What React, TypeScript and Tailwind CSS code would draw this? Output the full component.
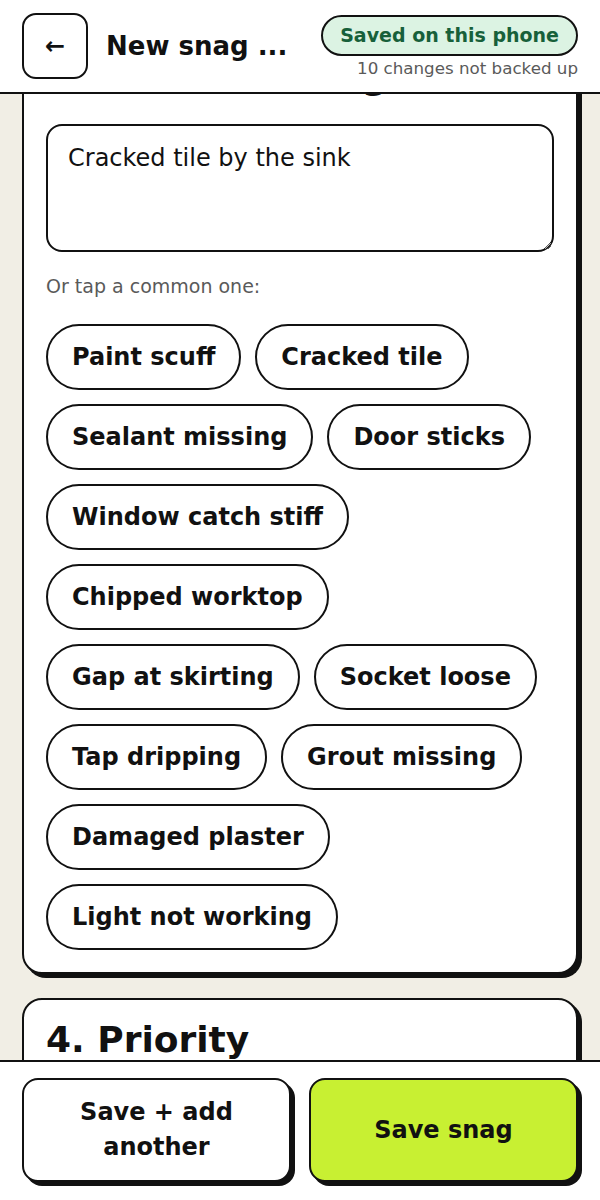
import React from "react";

const commonSnags = [
  "Paint scuff",
  "Cracked tile",
  "Sealant missing",
  "Door sticks",
  "Window catch stiff",
  "Chipped worktop",
  "Gap at skirting",
  "Socket loose",
  "Tap dripping",
  "Grout missing",
  "Damaged plaster",
  "Light not working",
];

const Header = () => (
  <header className="h-[94px] shrink-0 bg-white border-b-2 border-[#111] px-[22px] flex items-center gap-[18px]">
    <button className="w-[66px] h-[66px] shrink-0 rounded-[14px] border-2 border-[#111] bg-white flex items-center justify-center text-[24px] leading-none font-bold text-[#111]">
      ←
    </button>
    <h1 className="flex-1 min-w-0 whitespace-nowrap text-[26px] leading-[32px] font-bold text-[#111]">
      New snag ...
    </h1>
    <div className="flex flex-col items-end shrink-0">
      <span className="rounded-full border-2 border-[#111] bg-[#dcf3e3] px-[17px] py-[4px] text-[19px] leading-[29px] font-bold text-[#17603a]">
        Saved on this phone
      </span>
      <span className="mt-[2px] text-[16.7px] leading-[20px] text-[#5a5a5a]">
        10 changes not backed up
      </span>
    </div>
  </header>
);

const Chip = ({ label }: { label: string }) => (
  <button className="rounded-full border-2 border-[#111] bg-white px-6 py-[13px] text-[24px] leading-9 font-bold text-[#111] whitespace-nowrap">
    {label}
  </button>
);

const App = () => {
  return (
    <div
      className="h-screen flex flex-col bg-[#f1eee5] text-[#111]"
      style={{ fontFamily: '"DejaVu Sans", Verdana, sans-serif' }}
    >
      <Header />

      <main className="flex-1 min-h-0 overflow-hidden">
        {/* scrolled part-way down the form */}
        <div className="-mt-[60px] px-[22px] flex flex-col gap-6">
          <section className="rounded-[20px] border-2 border-[#111] bg-white px-[22px] pt-5 pb-[22px] shadow-[4px_4px_0_#111]">
            <h2 className="text-[37px] leading-[40px] font-bold mb-7">
              3. What’s wrong?
            </h2>
            <textarea
              className="block w-full h-32 rounded-[16px] border-2 border-[#111] px-5 py-3.5 text-[24px] leading-9 text-[#111] outline-none"
              defaultValue="Cracked tile by the sink"
            />
            <p className="mt-5 text-[19px] leading-[28px] text-[#5a5a5a]">
              Or tap a common one:
            </p>
            <div className="mt-6 flex flex-wrap gap-3.5">
              {commonSnags.map((s) => (
                <Chip key={s} label={s} />
              ))}
            </div>
          </section>

          <section className="rounded-[20px] border-2 border-[#111] bg-white px-[22px] pt-5 pb-[22px] shadow-[4px_4px_0_#111]">
            <h2 className="text-[36px] leading-[1.1] font-bold">4. Priority</h2>
            <div className="h-40" />
          </section>
        </div>
      </main>

      <footer className="shrink-0 bg-white border-t-2 border-[#111] px-[22px] pt-4 pb-[18px] grid grid-cols-2 gap-[18px]">
        <button className="h-[104px] rounded-[16px] border-2 border-[#111] bg-white shadow-[4px_4px_0_#111] px-4 text-[24px] leading-[35px] font-bold text-[#111]">
          Save + add
          <br />
          another
        </button>
        <button className="h-[104px] rounded-[16px] border-2 border-[#111] bg-[#c8f032] shadow-[4px_4px_0_#111] px-4 text-[24px] leading-[35px] font-bold text-[#111]">
          Save snag
        </button>
      </footer>
    </div>
  );
};

export default App;
